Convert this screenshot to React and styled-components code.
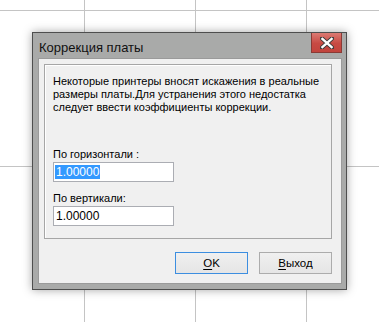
import React from "react";
import styled, { createGlobalStyle } from "styled-components";

const Global = createGlobalStyle`
  html, body { margin: 0; padding: 0; }
  body {
    width: 379px;
    height: 322px;
    overflow: hidden;
    background-color: #ffffff;
    background-image:
      linear-gradient(to right, #c4c4c4 1px, transparent 1px),
      linear-gradient(to bottom, #c4c4c4 1px, transparent 1px);
    background-size: 111px 156px;
    background-position: 84px 10px;
    font-family: "Liberation Sans", Arial, sans-serif;
  }
  #root { padding: 32px 0 0 32px; }
`;

const Window = styled.div`
  width: 315px;
  height: 258px;
  box-sizing: border-box;
  border: 1px solid #4e4e4e;
  background: #a9aaa9;
  box-shadow: 0 0 9px rgba(0, 0, 0, 0.35);
  display: flex;
  flex-direction: column;
  padding: 0 4px 5px 5px;
`;

const TitleBar = styled.div`
  height: 25px;
  display: flex;
  align-items: flex-start;
  justify-content: space-between;
`;

const Title = styled.div`
  font-size: 13px;
  color: #111;
  margin: 7px 0 0 1px;
  line-height: 15px;
  white-space: nowrap;
`;

const CloseButton = styled.div`
  width: 31px;
  height: 20px;
  box-sizing: border-box;
  border: 1px solid #8a3a35;
  border-top: none;
  background: linear-gradient(#dc7a73, #c74a43 55%, #c2443d);
  display: flex;
  align-items: center;
  justify-content: center;
`;

const Client = styled.div`
  flex: 1;
  background: #f0f0f0;
  border: 1px solid #9a9a9a;
  display: flex;
  flex-direction: column;
  padding: 5px 9px 0 5px;
`;

const GroupBox = styled.div`
  height: 175px;
  box-sizing: border-box;
  border: 1px solid #a6a6a6;
  box-shadow: inset 1px 1px 0 #ffffff;
  padding: 10px 8px 0 8px;
  display: flex;
  flex-direction: column;
  font-size: 11px;
  color: #000;
  white-space: nowrap;
`;

const Paragraph = styled.div`
  line-height: 13px;
  margin: 0;
`;

const Label = styled.div`
  line-height: 13px;
  margin-top: ${(p) => p.$top}px;
`;

const TextBox = styled.div`
  width: 121px;
  height: 20px;
  box-sizing: border-box;
  border: 1px solid #abadb3;
  background: #fff;
  margin-top: 1px;
  display: flex;
  align-items: center;
  padding-left: 1px;
  font-size: 12px;
`;

const Value = styled.span`
  line-height: 14px;
  padding: 0 1px;
  background: ${(p) => (p.$selected ? "#3399ff" : "transparent")};
  color: ${(p) => (p.$selected ? "#fff" : "#000")};
`;

const ButtonRow = styled.div`
  display: flex;
  justify-content: flex-end;
  gap: 11px;
  margin-top: 13px;
`;

const Button = styled.div`
  width: 73px;
  height: 22px;
  box-sizing: border-box;
  border: 1px solid ${(p) => (p.$default ? "#3c8ee0" : "#acacac")};
  background: linear-gradient(#f0f0f0, #e5e5e5);
  display: flex;
  align-items: center;
  justify-content: center;
  font-size: 11.5px;
  color: #000;
  & u { text-decoration-thickness: 1px; text-underline-offset: 2px; }
`;

export default function App() {
  return (
    <>
      <Global />
      <Window>
        <TitleBar>
          <Title>Коррекция платы</Title>
          <CloseButton>
            <svg width="14" height="12" viewBox="0 0 14 12">
              <path
                d="M2 1.5 L12 10.5 M12 1.5 L2 10.5"
                stroke="#3a3a3a"
                strokeWidth="4.2"
                strokeLinecap="square"
              />
              <path
                d="M2.4 1.9 L11.6 10.1 M11.6 1.9 L2.4 10.1"
                stroke="#ffffff"
                strokeWidth="2.4"
                strokeLinecap="square"
              />
            </svg>
          </CloseButton>
        </TitleBar>
        <Client>
          <GroupBox>
            <Paragraph>
              Некоторые принтеры вносят искажения в реальные
              <br />
              размеры платы.Для устранения этого недостатка
              <br />
              следует ввести коэффициенты коррекции.
            </Paragraph>
            <Label $top={34}>По горизонтали :</Label>
            <TextBox>
              <Value $selected>1.00000</Value>
            </TextBox>
            <Label $top={10}>По вертикали:</Label>
            <TextBox>
              <Value>1.00000</Value>
            </TextBox>
          </GroupBox>
          <ButtonRow>
            <Button $default>
              <span><u>O</u>K</span>
            </Button>
            <Button>
              <span><u>В</u>ыход</span>
            </Button>
          </ButtonRow>
        </Client>
      </Window>
    </>
  );
}
